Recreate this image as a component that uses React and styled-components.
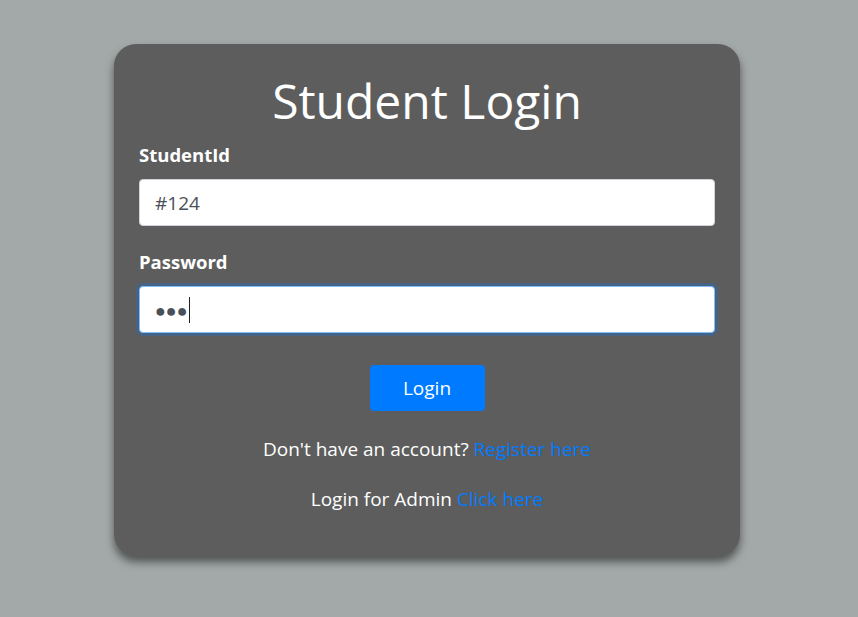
import React from "react";
import styled, { createGlobalStyle } from "styled-components";

const GlobalStyle = createGlobalStyle`
    body {
        margin: 0;
        background: #a3a9a8;
        font-family: "Open Sans", "Noto Sans", sans-serif;
    }
`;

const Page = styled.div`
    min-height: 617px;
    display: flex;
    justify-content: flex-start;
    align-items: flex-start;
    padding: 44px 0 0 114px;
    box-sizing: border-box;
`;

const Card = styled.div`
    width: 626px;
    height: 512px;
    box-sizing: border-box;
    padding: 18px 25px 0 25px;
    background: #5d5d5d;
    border-radius: 22px;
    box-shadow: 0 6px 8px rgba(0, 0, 0, 0.5);
    display: flex;
    flex-direction: column;
`;

const Title = styled.h1`
    margin: 0 0 3px 0;
    text-align: center;
    color: #ffffff;
    font-size: 48px;
    font-weight: 400;
    line-height: 78px;
`;

const Field = styled.div`
    display: flex;
    flex-direction: column;
    margin: ${(props) => props.top || "0"} 0 0 0;
`;

const Label = styled.label`
    color: #ffffff;
    font-size: 18.5px;
    font-weight: 700;
    line-height: 24px;
    margin: 0 0 12px 0;
`;

const Input = styled.div`
    height: 47px;
    box-sizing: border-box;
    background: #ffffff;
    border: 1px solid ${(props) => (props.focus ? "#80bdff" : "#ced4da")};
    border-radius: 4px;
    box-shadow: ${(props) =>
        props.focus ? "0 0 0 3px rgba(0, 123, 255, 0.25)" : "none"};
    padding: 0 15px;
    display: flex;
    align-items: center;
    color: #495057;
    font-size: 19px;
`;

const Dots = styled.span`
    font-size: 18px;
    color: #495057;
`;

const Caret = styled.span`
    display: inline-block;
    width: 1px;
    height: 26px;
    background: #222;
    margin: 0 0 0 1px;
`;

const ButtonRow = styled.div`
    display: flex;
    justify-content: center;
    margin: 32px 0 0 0;
`;

const Button = styled.button`
    width: 115px;
    height: 46px;
    border: none;
    border-radius: 4px;
    background: #007bff;
    color: #ffffff;
    font-family: inherit;
    font-size: 19px;
`;

const Line = styled.p`
    margin: ${(props) => props.top} 0 0 0;
    text-align: center;
    color: #ffffff;
    font-size: 19px;
    line-height: 26px;
`;

const Link = styled.a`
    color: #007bff;
    text-decoration: none;
`;

const App = () => {
    return (
        <Page>
            <GlobalStyle />
            <Card>
                <Title>Student Login</Title>
                <Field top="0">
                    <Label>StudentId</Label>
                    <Input>#124</Input>
                </Field>
                <Field top="24px">
                    <Label>Password</Label>
                    <Input focus>
                        <Dots>●●●</Dots>
                        <Caret />
                    </Input>
                </Field>
                <ButtonRow>
                    <Button>Login</Button>
                </ButtonRow>
                <Line top="25px">
                    Don't have an account? <Link href="#">Register here</Link>
                </Line>
                <Line top="24px">
                    Login for Admin <Link href="#">Click here</Link>
                </Line>
            </Card>
        </Page>
    );
};

export default App;
